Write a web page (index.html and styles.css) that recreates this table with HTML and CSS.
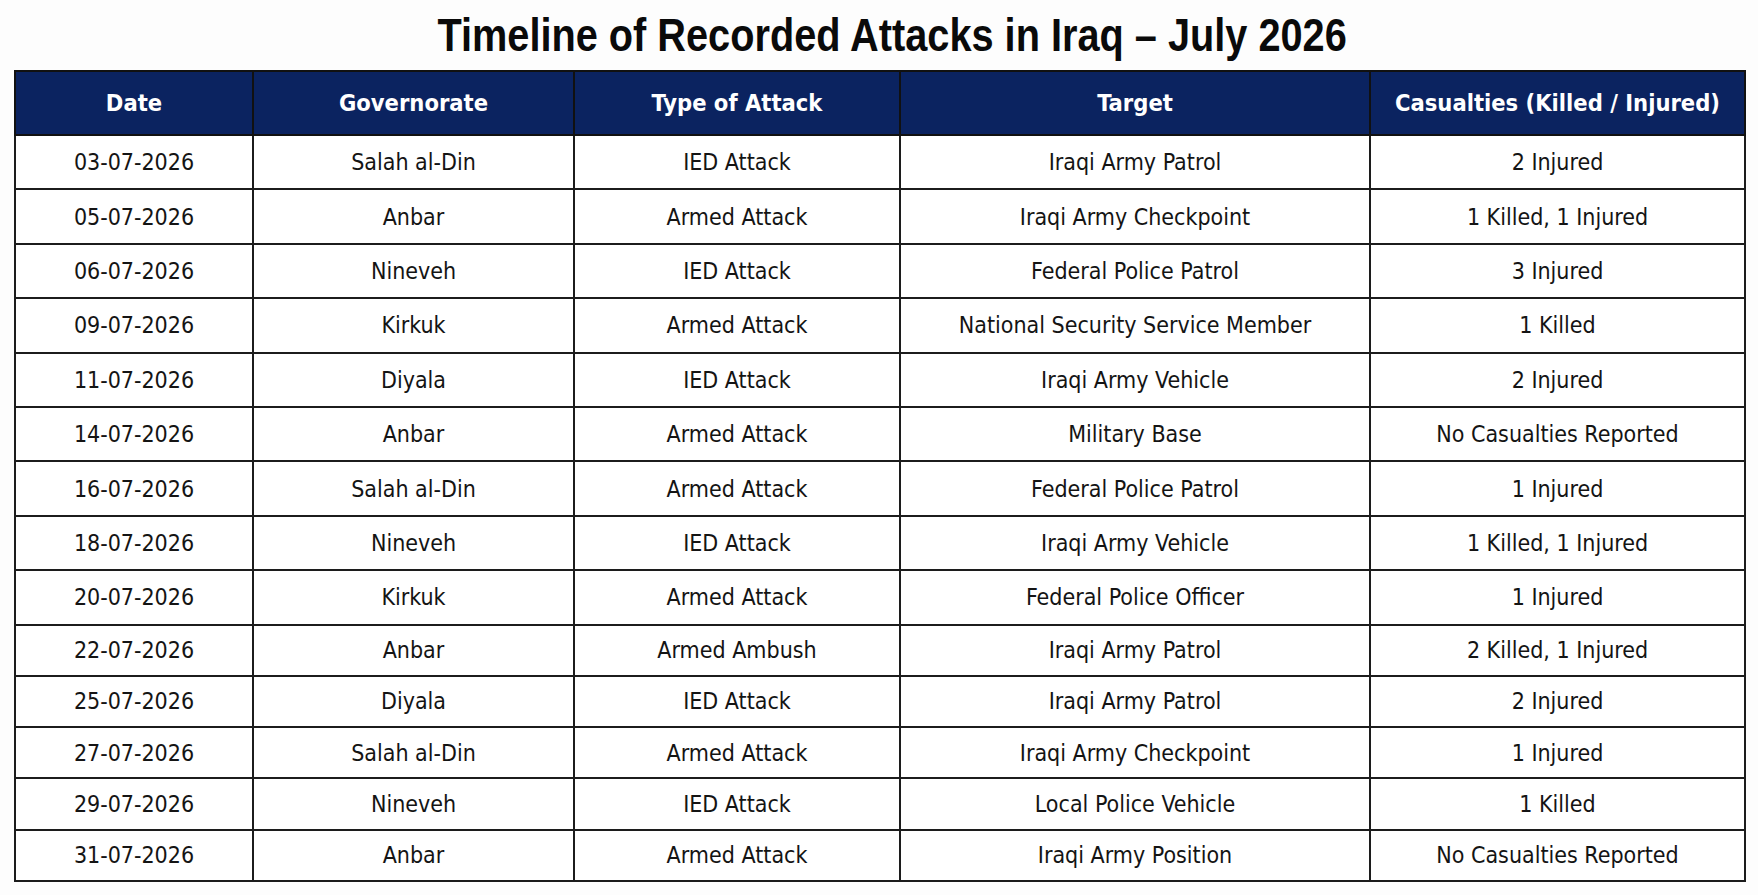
FILE: index.html
```html
<!DOCTYPE html>
<html lang="en">
<head>
<meta charset="utf-8">
<title>Timeline of Recorded Attacks in Iraq – July 2026</title>
<link rel="stylesheet" href="styles.css">
</head>
<body>
<main class="page">
  <h1 class="title"><span class="title-text">Timeline of Recorded Attacks in Iraq – July 2026</span></h1>
  <table class="timeline">
    <colgroup>
      <col class="c-date">
      <col class="c-gov">
      <col class="c-type">
      <col class="c-target">
      <col class="c-cas">
    </colgroup>
    <thead>
      <tr>
        <th>Date</th>
        <th>Governorate</th>
        <th>Type of Attack</th>
        <th>Target</th>
        <th>Casualties (Killed / Injured)</th>
      </tr>
    </thead>
    <tbody>
      <tr class="tall"><td>03-07-2026</td><td>Salah al-Din</td><td>IED Attack</td><td>Iraqi Army Patrol</td><td>2 Injured</td></tr>
      <tr class="tall"><td>05-07-2026</td><td>Anbar</td><td>Armed Attack</td><td>Iraqi Army Checkpoint</td><td>1 Killed, 1 Injured</td></tr>
      <tr class="tall"><td>06-07-2026</td><td>Nineveh</td><td>IED Attack</td><td>Federal Police Patrol</td><td>3 Injured</td></tr>
      <tr class="tall"><td>09-07-2026</td><td>Kirkuk</td><td>Armed Attack</td><td>National Security Service Member</td><td>1 Killed</td></tr>
      <tr class="tall"><td>11-07-2026</td><td>Diyala</td><td>IED Attack</td><td>Iraqi Army Vehicle</td><td>2 Injured</td></tr>
      <tr class="tall"><td>14-07-2026</td><td>Anbar</td><td>Armed Attack</td><td>Military Base</td><td>No Casualties Reported</td></tr>
      <tr class="tall"><td>16-07-2026</td><td>Salah al-Din</td><td>Armed Attack</td><td>Federal Police Patrol</td><td>1 Injured</td></tr>
      <tr class="tall"><td>18-07-2026</td><td>Nineveh</td><td>IED Attack</td><td>Iraqi Army Vehicle</td><td>1 Killed, 1 Injured</td></tr>
      <tr class="tall"><td>20-07-2026</td><td>Kirkuk</td><td>Armed Attack</td><td>Federal Police Officer</td><td>1 Injured</td></tr>
      <tr><td>22-07-2026</td><td>Anbar</td><td>Armed Ambush</td><td>Iraqi Army Patrol</td><td>2 Killed, 1 Injured</td></tr>
      <tr><td>25-07-2026</td><td>Diyala</td><td>IED Attack</td><td>Iraqi Army Patrol</td><td>2 Injured</td></tr>
      <tr><td>27-07-2026</td><td>Salah al-Din</td><td>Armed Attack</td><td>Iraqi Army Checkpoint</td><td>1 Injured</td></tr>
      <tr><td>29-07-2026</td><td>Nineveh</td><td>IED Attack</td><td>Local Police Vehicle</td><td>1 Killed</td></tr>
      <tr><td>31-07-2026</td><td>Anbar</td><td>Armed Attack</td><td>Iraqi Army Position</td><td>No Casualties Reported</td></tr>
    </tbody>
  </table>
</main>
</body>
</html>
```

FILE: styles.css
```css
html, body {
  margin: 0;
  padding: 0;
  background: #fdfdfd;
}

.page {
  width: 1758px;
  height: 895px;
  box-sizing: border-box;
  padding: 0 14px;
  display: flex;
  flex-direction: column;
}

.title {
  margin: 0;
  height: 70px;
  display: flex;
  align-items: center;
  justify-content: center;
  padding-left: 26px;
  padding-bottom: 2px;
  box-sizing: border-box;
  font-family: "Liberation Sans Narrow", "Liberation Sans", Arial, sans-serif;
  font-weight: 700;
  font-size: 47px;
  line-height: 1;
  color: #0a0a0a;
}

.title-text {
  display: inline-block;
  white-space: nowrap;
  transform: scaleX(0.845);
}

.timeline {
  width: 1730px;
  border-collapse: collapse;
  table-layout: fixed;
  border: 2px solid #1c1c1c;
  font-family: "DejaVu Sans Condensed", "DejaVu Sans", "Liberation Sans", sans-serif;
  color: #141414;
}

.c-date { width: 238px; }
.c-gov { width: 321px; }
.c-type { width: 326px; }
.c-target { width: 470px; }
.c-cas { width: 375px; }

.timeline th {
  background: #0b2360;
  color: #ffffff;
  font-weight: 700;
  font-size: 23.5px;
  height: 62px;
  padding: 0;
  border: 2px solid #111111;
  text-align: center;
  vertical-align: middle;
}

.timeline td {
  background: #ffffff;
  font-size: 23px;
  height: 49.3px;
  padding: 0;
  border: 2px solid #1c1c1c;
  text-align: center;
  vertical-align: middle;
}

.timeline tr.tall td {
  height: 52.4px;
}
```
